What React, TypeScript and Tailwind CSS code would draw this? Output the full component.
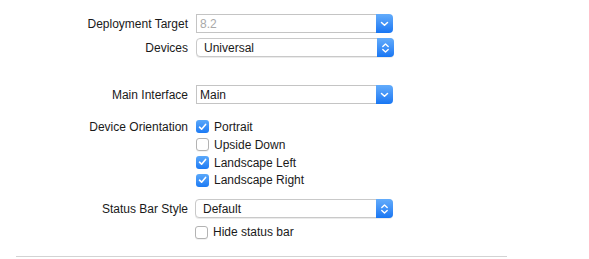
import React from "react";

const font = { fontFamily: '"Liberation Sans", Arial, sans-serif' };

function ChevronDown() {
  return (
    <svg width="9" height="6" viewBox="0 0 9 6">
      <path d="M1.5 1.5 L4.5 4.3 L7.5 1.5" fill="none" stroke="white" strokeWidth="1.5" strokeLinecap="round" strokeLinejoin="round" />
    </svg>
  );
}

function ChevronUpDown() {
  return (
    <svg width="9" height="12" viewBox="0 0 9 12">
      <path d="M1.8 4.5 L4.5 2 L7.2 4.5" fill="none" stroke="white" strokeWidth="1.4" strokeLinecap="round" strokeLinejoin="round" />
      <path d="M1.8 7.5 L4.5 10 L7.2 7.5" fill="none" stroke="white" strokeWidth="1.4" strokeLinecap="round" strokeLinejoin="round" />
    </svg>
  );
}

function Combo({ value, muted }: { value: string; muted?: boolean }) {
  return (
    <div className="flex h-[19px] w-[197px]">
      <div
        className={`flex flex-1 items-center border border-r-0 border-[#c4c4c4] bg-white pl-[3px] text-[12px] ${
          muted ? "text-[#a9a9a9]" : "text-[#1a1a1a]"
        }`}
      >
        {value}
      </div>
      <div className="flex w-[17px] items-center justify-center rounded-r-[4px] bg-gradient-to-b from-[#63acfb] to-[#1676f3]">
        <ChevronDown />
      </div>
    </div>
  );
}

function Popup({ value }: { value: string }) {
  return (
    <div className="flex h-[19px] w-[198px] rounded-[4px] border border-[#c9c9c9] bg-white shadow-[0_1px_0_rgba(0,0,0,0.08)]">
      <div className="flex flex-1 items-center pl-[7px] text-[12px] text-[#1a1a1a]">{value}</div>
      <div className="-my-px -mr-px flex w-[17px] items-center justify-center rounded-r-[4px] bg-gradient-to-b from-[#63acfb] to-[#1676f3]">
        <ChevronUpDown />
      </div>
    </div>
  );
}

function Check({ label, checked }: { label: string; checked?: boolean }) {
  return (
    <div className="flex h-[17.8px] items-center gap-[5px]">
      {checked ? (
        <div className="flex h-[13px] w-[13px] items-center justify-center rounded-[3px] bg-gradient-to-b from-[#5aa8fa] to-[#1a7af4]">
          <svg width="9" height="8" viewBox="0 0 9 8">
            <path d="M1.5 4.2 L3.6 6.2 L7.6 1.4" fill="none" stroke="white" strokeWidth="1.6" strokeLinecap="round" strokeLinejoin="round" />
          </svg>
        </div>
      ) : (
        <div className="h-[13px] w-[13px] rounded-[3px] border border-[#b3b3b3] bg-white shadow-[0_1px_0_rgba(0,0,0,0.05)]" />
      )}
      <span className="text-[12px] text-[#1a1a1a]">{label}</span>
    </div>
  );
}

function Label({ children }: { children: React.ReactNode }) {
  return <div className="w-[188px] shrink-0 text-right text-[12px] text-[#1a1a1a]">{children}</div>;
}

export default function App() {
  return (
    <div className="h-[259px] w-[589px] bg-white" style={font}>
      <div className="pt-[14px]">
        <div className="flex items-center gap-[8px]">
          <Label>Deployment Target</Label>
          <Combo value="8.2" muted />
        </div>
        <div className="mt-[5px] flex items-center gap-[8px]">
          <Label>Devices</Label>
          <Popup value="Universal" />
        </div>
        <div className="mt-[28px] flex items-center gap-[8px]">
          <Label>Main Interface</Label>
          <Combo value="Main" />
        </div>
        <div className="mt-[14px] flex items-start gap-[8px]">
          <div className="flex h-[17.8px] items-center">
            <Label>Device Orientation</Label>
          </div>
          <div className="flex flex-col">
            <Check label="Portrait" checked />
            <Check label="Upside Down" />
            <Check label="Landscape Left" checked />
            <Check label="Landscape Right" checked />
          </div>
        </div>
        <div className="mt-[10px] flex items-center gap-[7px]">
          <Label>Status Bar Style</Label>
          <Popup value="Default" />
        </div>
        <div className="mt-[5px] flex items-center gap-[7px]">
          <div className="w-[188px]" />
          <Check label="Hide status bar" />
        </div>
        <div className="ml-[16px] mt-[15px] h-px w-[491px] bg-[#d3d3d3]" />
      </div>
    </div>
  );
}
